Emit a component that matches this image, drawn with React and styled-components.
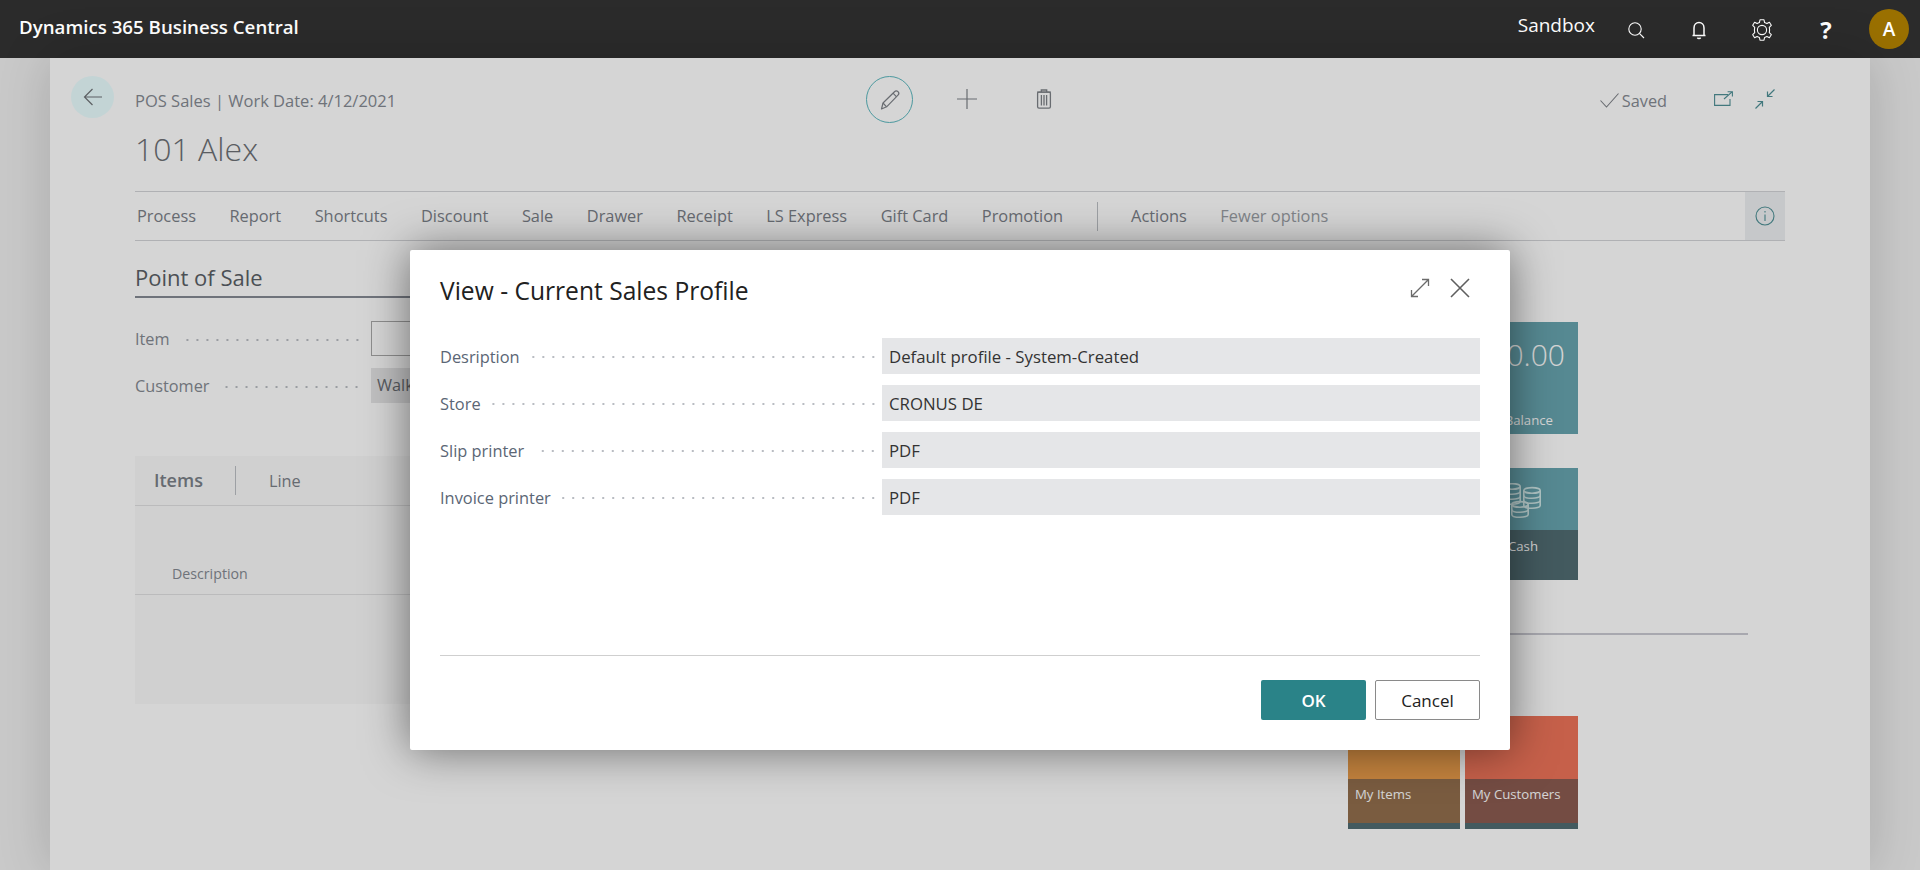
import styled, { createGlobalStyle } from "styled-components";

const GlobalStyle = createGlobalStyle`
  html, body { margin: 0; padding: 0; }
  body {
    font-family: "Open Sans", "Noto Sans", sans-serif;
    background: #f1f1f1;
    color: #505c6d;
  }
`;

const Stroke = ({ size = 20, w, h, color = "currentColor", width = 1, children }) => (
  <svg width={w || size} height={h || size} viewBox={`0 0 ${w || size} ${h || size}`} fill="none" stroke={color} strokeWidth={width}>
    {children}
  </svg>
);

const NAV = ["Process", "Report", "Shortcuts", "Discount", "Sale", "Drawer", "Receipt", "LS Express", "Gift Card", "Promotion"];
const FIELDS = [
  ["Desription", "Default profile - System-Created"],
  ["Store", "CRONUS DE"],
  ["Slip printer", "PDF"],
  ["Invoice printer", "PDF"],
];

export default function App() {
  return (
    <Screen>
      <GlobalStyle />
      <TopBar>
        <Brand>Dynamics 365 Business Central</Brand>
        <TopRight>
          <Env>Sandbox</Env>
          <TopIcon>
            <Stroke size={20} color="#fff" width={1.1}>
              <circle cx="9" cy="9" r="6.2" />
              <path d="M13.4 13.4 L18 18" />
            </Stroke>
          </TopIcon>
          <TopIcon>
            <Stroke size={20} color="#fff" width={1.5}>
              <path d="M3.5 15.5 H16.5 M5 15.5 V8 C5 4.8 7.2 2.6 10 2.6 C12.8 2.6 15 4.8 15 8 V15.5" />
              <path d="M8.4 17.6 C9 18.9 11 18.9 11.6 17.6" />
            </Stroke>
          </TopIcon>
          <TopIcon>
            <Stroke size={24} color="#fff" width={1.1}>
              <path d="M10 1.8 H14 L14.6 4.6 L16.9 5.6 L19.4 4.2 L21.3 7.3 L19.3 9.3 L19.6 12 L19.3 14.7 L21.3 16.7 L19.4 19.8 L16.9 18.4 L14.6 19.4 L14 22.2 H10 L9.4 19.4 L7.1 18.4 L4.6 19.8 L2.7 16.7 L4.7 14.7 L4.4 12 L4.7 9.3 L2.7 7.3 L4.6 4.2 L7.1 5.6 L9.4 4.6 Z" strokeLinejoin="round" />
              <circle cx="12" cy="12" r="4.6" />
            </Stroke>
          </TopIcon>
          <Help>?</Help>
          <Avatar>A</Avatar>
        </TopRight>
      </TopBar>

      <Card>
        <BackButton>
          <Stroke size={20} color="#6f7378" width={1.2}>
            <path d="M19 10 H1.5 M9.5 2 L1.5 10 L9.5 18" />
          </Stroke>
        </BackButton>
        <Main>
          <Header>
            <div>
              <Crumb>POS Sales | Work Date: 4/12/2021</Crumb>
              <Title>101 Alex</Title>
            </div>
            <Actions>
              <EditButton>
                <Stroke size={22} color="#7e8288" width={1.2}>
                  <path d="M2.5 20 L4 14 L15.5 2.7 C16.5 1.7 18 1.7 19 2.7 C20 3.7 20 5.2 19 6.2 L7.6 17.8 Z" strokeLinejoin="round" />
                  <path d="M4 14 L7.6 17.8 M14 4.2 L17.6 7.8" />
                </Stroke>
              </EditButton>
              <ActionIcon $left={44}>
                <Stroke size={20} color="#7e8288" width={1.2}>
                  <path d="M10 0 V20 M0 10 H20" />
                </Stroke>
              </ActionIcon>
              <ActionIcon $left={59}>
                <Stroke w={16} h={20} color="#7e8288" width={1.3}>
                  <path d="M1 3.2 H15 M5.3 3.2 V1 H10.7 V3.2" />
                  <rect x="1.6" y="3.2" width="12.8" height="16" rx="1.4" />
                  <path d="M5.4 6 V16.5 M8 6 V16.5 M10.6 6 V16.5" />
                </Stroke>
              </ActionIcon>
            </Actions>
            <Status>
              <CheckMark>
                <Stroke w={19} h={15} color="#7e8288" width={1.1}>
                  <path d="M.5 7.5 L6.5 14 L18.5 .5" />
                </Stroke>
              </CheckMark>
              <Saved>Saved</Saved>
              <StatusIcon $left={47} $top={0}>
                <Stroke w={19} h={15} color="#4f9096" width={1.1}>
                  <path d="M14 3.6 H.6 V14.4 H16 V8" />
                  <path d="M10 8 L17.8 1.2 M13.6 .8 H18.4 V5.4" />
                </Stroke>
              </StatusIcon>
              <StatusIcon $left={22} $top={-2}>
                <Stroke size={20} color="#4f9096" width={1.2}>
                  <path d="M19.5 .5 L12.5 7.5 M12.5 2.5 V7.5 H17.5" />
                  <path d="M.5 19.5 L7.5 12.5 M2.5 12.5 H7.5 V17.5" />
                </Stroke>
              </StatusIcon>
            </Status>
          </Header>

          <Nav>
            {NAV.map((item) => (
              <NavItem key={item}>{item}</NavItem>
            ))}
            <NavDivider />
            <NavItem>Actions</NavItem>
            <NavItem $muted>Fewer options</NavItem>
            <InfoBox>
              <Stroke size={20} color="#4f9096" width={1.1}>
                <circle cx="10" cy="10" r="9" />
                <path d="M10 8.5 V15 M10 5 V6.4" />
              </Stroke>
            </InfoBox>
          </Nav>

          <Body>
            <LeftColumn>
              <SectionTitle>Point of Sale</SectionTitle>
              <Fields>
                <PageField>
                  <PageLabel>Item</PageLabel>
                  <Dots />
                  <InputBox />
                </PageField>
                <PageField>
                  <PageLabel>Customer</PageLabel>
                  <Dots />
                  <InputBox $filled>Walk</InputBox>
                </PageField>
              </Fields>
              <ItemsPanel>
                <ItemsTabs>
                  <ItemsTitle>Items</ItemsTitle>
                  <TabLabel>Line</TabLabel>
                </ItemsTabs>
                <ColumnHead>
                  <span>Description</span>
                </ColumnHead>
              </ItemsPanel>
            </LeftColumn>

            <RightColumn>
              <TileGrid>
                <Tile $col={2} $bg="#67a5af">
                  <TileValue>0.00</TileValue>
                  <TileFoot $height={28}>
                    <TileLabel $inset={25} $right $top={5}>Balance</TileLabel>
                  </TileFoot>
                </Tile>
                <Tile $col={2} $bg="#67a5af">
                  <TileIcon>
                    <Coins />
                  </TileIcon>
                  <TileFoot $height={50} $bg="#516c72">
                    <TileLabel $inset={40} $right $top={7}>Cash</TileLabel>
                  </TileFoot>
                </Tile>
              </TileGrid>
              <SectionRule />
              <TileGrid>
                <Tile $tall $bg="#eb9d4b">
                  <TileSpacer />
                  <TileFoot $height={44} $bg="#926f4d">
                    <TileLabel $inset={7}>My Items</TileLabel>
                  </TileFoot>
                  <TileStrip />
                </Tile>
                <Tile $tall $bg="#ee7459">
                  <TileSpacer />
                  <TileFoot $height={44} $bg="#8b5b51">
                    <TileLabel $inset={7}>My Customers</TileLabel>
                  </TileFoot>
                  <TileStrip />
                </Tile>
              </TileGrid>
            </RightColumn>
          </Body>
        </Main>
      </Card>

      <Backdrop>
        <Dialog>
          <DialogHead>
            <DialogTitle>View - Current Sales Profile</DialogTitle>
            <DialogTools>
              <Stroke size={20} color="#6b6b6b" width={1.3}>
                <path d="M1.5 18.5 L18.5 1.5 M12 1.5 H18.5 V8 M1.5 12 V18.5 H8" />
              </Stroke>
              <Stroke size={20} color="#5f5f5f" width={1.6}>
                <path d="M1 1 L19 19 M19 1 L1 19" />
              </Stroke>
            </DialogTools>
          </DialogHead>
          <DialogBody>
            {FIELDS.map(([label, value]) => (
              <DialogField key={label}>
                <DialogLabel>{label}</DialogLabel>
                <Dots />
                <DialogValue>{value}</DialogValue>
              </DialogField>
            ))}
          </DialogBody>
          <DialogFooter>
            <PrimaryButton>OK</PrimaryButton>
            <SecondaryButton>Cancel</SecondaryButton>
          </DialogFooter>
        </Dialog>
      </Backdrop>
    </Screen>
  );
}

const CoinStack = ({ x, y, bands }) => (
  <g transform={`translate(${x} ${y})`}>
    <ellipse cx="9" cy="3.4" rx="8.2" ry="2.8" />
    <path d={`M.8 3.4 V${3.4 + bands * 5} C.8 ${7.2 + bands * 5} 17.2 ${7.2 + bands * 5} 17.2 ${3.4 + bands * 5} V3.4`} />
    {Array.from({ length: bands - 1 }, (_, i) => (
      <path key={i} d={`M.8 ${8.4 + i * 5} C.8 ${12.2 + i * 5} 17.2 ${12.2 + i * 5} 17.2 ${8.4 + i * 5}`} />
    ))}
  </g>
);

const Coins = () => (
  <svg width="44" height="38" viewBox="0 0 44 38" fill="none" stroke="#d4ecec" strokeWidth="1.6">
    <CoinStack x={5} y={0} bands={3} />
    <CoinStack x={25} y={4} bands={3} />
    <CoinStack x={13} y={18} bands={2} />
  </svg>
);

const Screen = styled.div`
  position: relative;
  height: 100vh;
  overflow: hidden;
  display: flex;
  flex-direction: column;
`;

const TopBar = styled.header`
  height: 58px;
  flex: none;
  background: #2b2b2b;
  color: #fff;
  display: flex;
  align-items: center;
  justify-content: space-between;
  padding: 0 11px 0 19px;
`;

const Brand = styled.div`
  font-size: 18.7px;
  font-weight: 600;
  margin-top: -6px;
`;

const TopRight = styled.div`
  display: flex;
  align-items: center;
`;

const Env = styled.div`
  font-size: 19px;
  margin: -8px 19px 0 0;
`;

const TopIcon = styled.div`
  width: 63px;
  margin-left: -10px;
  margin-right: 10px;
  display: flex;
  justify-content: center;
  &:first-of-type { width: 20px; }
  margin-top: 1px;
`;

const Help = styled.div`
  width: 44px;
  text-align: center;
  font-size: 24px;
  font-weight: 700;
  margin: 0 0 0 1px;
`;

const Avatar = styled.div`
  width: 40px;
  height: 40px;
  margin-left: 21px;
  border-radius: 50%;
  background: #9a7000;
  display: flex;
  align-items: center;
  justify-content: center;
  font-size: 19px;
  font-weight: 600;
`;

const Card = styled.main`
  flex: 1;
  margin: 0 50px;
  padding: 18px 85px 0 21px;
  background: #fff;
  box-shadow: 0 0 50px rgba(0, 0, 0, 0.16);
  display: flex;
  gap: 21px;
`;

const BackButton = styled.div`
  width: 43px;
  height: 42px;
  flex: none;
  border-radius: 50%;
  background: #eafeff;
  display: flex;
  align-items: center;
  justify-content: center;
`;

const Main = styled.div`
  flex: 1;
  min-width: 0;
`;

const Header = styled.div`
  height: 115px;
  display: grid;
  grid-template-columns: 731px auto 1fr;
`;

const Crumb = styled.div`
  font-size: 16.5px;
  line-height: 20px;
  margin-top: 15px;
  color: #858a92;
`;

const Title = styled.h1`
  font-size: 32px;
  font-weight: 300;
  line-height: 42px;
  margin: 17px 0 0;
  color: #6d7075;
`;

const Actions = styled.div`
  display: flex;
  align-items: flex-start;
`;

const EditButton = styled.div`
  width: 47px;
  height: 47px;
  border-radius: 50%;
  border: 1px solid #5cb8bf;
  box-sizing: border-box;
  display: flex;
  align-items: center;
  justify-content: center;
`;

const ActionIcon = styled.div`
  margin: 13px 0 0 ${(p) => p.$left}px;
  display: flex;
`;

const Status = styled.div`
  display: flex;
  align-items: flex-start;
  justify-content: flex-end;
  padding-right: 10px;
  margin-top: 15px;
`;

const CheckMark = styled.div`
  display: flex;
  margin-top: 2px;
`;

const Saved = styled.span`
  font-size: 16.3px;
  line-height: 20px;
  margin-left: 3px;
  color: #858a92;
`;

const StatusIcon = styled.div`
  margin-left: ${(p) => p.$left}px;
  margin-top: ${(p) => p.$top}px;
  display: flex;
`;

const Nav = styled.nav`
  height: 48px;
  border-top: 1px solid #d3d4d8;
  border-bottom: 1px solid #d3d4d8;
  display: flex;
  align-items: center;
  gap: 33.5px;
  padding-left: 2px;
  position: relative;
`;

const NavItem = styled.span`
  font-size: 16.36px;
  color: ${(p) => (p.$muted ? "#9a9ea5" : "#7b8088")};
`;

const NavDivider = styled.span`
  width: 1px;
  height: 29px;
  background: #bcc0c5;
`;

const InfoBox = styled.div`
  width: 40px;
  align-self: stretch;
  margin-left: auto;
  background: #edf0f2;
  display: flex;
  align-items: center;
  justify-content: center;
`;

const Body = styled.div`
  display: grid;
  grid-template-columns: 1fr 437px;
`;

const LeftColumn = styled.section`
  padding-right: 13px;
`;

const SectionTitle = styled.h2`
  margin: 23px 0 0;
  padding-bottom: 5px;
  font-size: 22px;
  font-weight: 500;
  line-height: 27px;
  color: #5a5f66;
  border-bottom: 2px solid #858a94;
`;

const Fields = styled.div`
  margin-top: 23px;
  display: flex;
  flex-direction: column;
  gap: 12px;
`;

const PageField = styled.div`
  display: flex;
  align-items: center;
  height: 35px;
`;

const PageLabel = styled.span`
  font-size: 16.3px;
  color: #858a92;
`;

const Dots = styled.span`
  flex: 1;
  height: 2px;
  margin: 2px 0 0 10px;
  background-image: radial-gradient(circle, #b9bcc2 1px, transparent 1.1px);
  background-size: 10px 2px;
  background-position: right center;
  background-repeat: repeat-x;
`;

const InputBox = styled.div`
  width: 964px;
  height: 35px;
  margin-left: 9px;
  box-sizing: border-box;
  padding: 0 6px;
  flex: none;
  border: ${(p) => (p.$filled ? "none" : "1px solid #a9a9a9")};
  background: ${(p) => (p.$filled ? "#e6e6e8" : "#fff")};
  font-size: 16.3px;
  line-height: 35px;
  color: #6a6e74;
`;

const ItemsPanel = styled.div`
  margin-top: 53px;
  height: 248px;
  background: #f9f9f9;
  display: flex;
  flex-direction: column;
`;

const ItemsTabs = styled.div`
  height: 49px;
  flex: none;
  border-bottom: 1px solid #e0e0e2;
  display: flex;
  align-items: center;
`;

const ItemsTitle = styled.span`
  width: 81px;
  height: 29px;
  margin-left: 19px;
  line-height: 29px;
  font-size: 18px;
  font-weight: 600;
  color: #7b8088;
  border-right: 1px solid #bcc0c5;
`;

const TabLabel = styled.span`
  margin-left: 33px;
  font-size: 16.3px;
  color: #7b8088;
`;

const ColumnHead = styled.div`
  height: 89px;
  flex: none;
  box-sizing: border-box;
  padding: 58px 0 0 37px;
  border-bottom: 1px solid #e0e0e2;
  font-size: 14.2px;
  line-height: 20px;
  color: #858a92;
`;

const RightColumn = styled.section`
  padding-top: 81px;
`;

const TileGrid = styled.div`
  display: grid;
  grid-template-columns: 112px 113px;
  gap: 34px 5px;
`;

const Tile = styled.div`
  grid-column: ${(p) => p.$col || "auto"};
  height: ${(p) => (p.$tall ? 113 : 112)}px;
  background: ${(p) => p.$bg};
  display: flex;
  flex-direction: column;
  color: #fff;
`;

const TileValue = styled.div`
  flex: 1;
  padding: 13px 13px 0 0;
  text-align: right;
  font-size: 30px;
  font-weight: 300;
  line-height: 40px;
`;

const TileIcon = styled.div`
  flex: 1;
  padding: 15px 36px 0 0;
  display: flex;
  justify-content: flex-end;
  align-items: flex-start;
`;

const TileSpacer = styled.div`
  flex: 1;
`;

const TileFoot = styled.div`
  height: ${(p) => p.$height}px;
  background: ${(p) => p.$bg || "transparent"};
  flex: none;
`;

const TileLabel = styled.div`
  padding-top: ${(p) => p.$top ?? 6}px;
  font-size: 13.2px;
  line-height: 18px;
  ${(p) => (p.$right ? `text-align: right; padding-right: ${p.$inset}px;` : `padding-left: ${p.$inset}px;`)}
`;

const TileStrip = styled.div`
  height: 6px;
  flex: none;
  background: #516c72;
`;

const SectionRule = styled.div`
  width: 400px;
  margin: 53px 0 81px;
  border-top: 2px solid #cacad2;
`;

const Backdrop = styled.div`
  position: absolute;
  top: 58px;
  left: 0;
  right: 0;
  bottom: 0;
  padding-top: 192px;
  background: rgba(0, 0, 0, 0.165);
  display: flex;
  justify-content: center;
  align-items: flex-start;
`;

const Dialog = styled.div`
  width: 1100px;
  height: 500px;
  box-sizing: border-box;
  padding: 0 30px 30px;
  border-radius: 2px;
  background: #fff;
  box-shadow: 0 0 45px rgba(0, 0, 0, 0.5);
  display: flex;
  flex-direction: column;
`;

const DialogHead = styled.div`
  height: 88px;
  flex: none;
  display: flex;
  align-items: center;
  justify-content: space-between;
  padding-right: 10px;
`;

const DialogTitle = styled.h2`
  margin: 0;
  font-size: 24.6px;
  font-weight: 500;
  color: #212121;
  margin-top: -8px;
`;

const DialogTools = styled.div`
  display: flex;
  gap: 20px;
  margin-top: -12px;
`;

const DialogBody = styled.div`
  flex: 1;
  display: flex;
  flex-direction: column;
  gap: 11px;
`;

const DialogField = styled.div`
  display: flex;
  align-items: center;
  height: 36px;
`;

const DialogLabel = styled.span`
  font-size: 16.4px;
  color: #5b6675;
`;

const DialogValue = styled.div`
  width: 598px;
  height: 36px;
  flex: none;
  margin-left: 4px;
  padding: 0 7px;
  box-sizing: border-box;
  background: #e5e6e8;
  font-size: 16.8px;
  line-height: 37px;
  color: #333;
`;

const DialogFooter = styled.div`
  flex: none;
  border-top: 1px solid #cfcfcf;
  padding-top: 24px;
  display: flex;
  justify-content: flex-end;
  gap: 9px;
`;

const PrimaryButton = styled.button`
  width: 105px;
  height: 40px;
  border: none;
  border-radius: 2px;
  background: #2a8388;
  color: #fff;
  font-family: inherit;
  font-size: 17px;
  font-weight: 600;
`;

const SecondaryButton = styled.button`
  width: 105px;
  height: 40px;
  border: 1px solid #8a8a8a;
  border-radius: 2px;
  background: #fff;
  color: #212121;
  font-family: inherit;
  font-size: 17px;
`;
